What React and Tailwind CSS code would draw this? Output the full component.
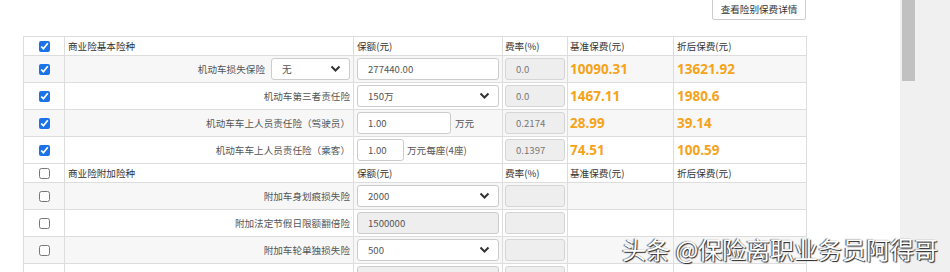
import React from "react";

const font = { fontFamily: '"Microsoft YaHei", "Noto Sans CJK SC", sans-serif' };

const Chevron = () => (
  <svg width="11" height="8" viewBox="0 0 11 8" className="shrink-0">
    <path d="M1.5 1.5 L5.5 5.5 L9.5 1.5" fill="none" stroke="#333" strokeWidth="2" />
  </svg>
);

const Select = ({ value, width }) => (
  <div
    className={`flex h-[22px] items-center justify-between rounded-[3px] border border-[#cccccc] bg-white pl-[10px] pr-[8px] text-[#555] ${width}`}
  >
    <span>{value}</span>
    <Chevron />
  </div>
);

const Input = ({ value, width, disabled }) => (
  <div
    className={`flex h-[22px] items-center rounded-[3px] border border-[#cccccc] pl-[10px] text-[#555] ${width} ${
      disabled ? "bg-[#eeeeee]" : "bg-white"
    }`}
  >
    {value}
  </div>
);

const Rate = ({ value }) => (
  <div className="mx-auto flex h-[22px] w-[60px] items-center rounded-[3px] border border-[#d5d5d5] bg-[#eeeeee] pl-[10px] text-[#777]">
    {value}
  </div>
);

const Box = ({ checked }) => (
  <input
    type="checkbox"
    checked={checked}
    readOnly
    className="m-0 mx-auto block h-[11px] w-[11px] accent-[#1a73e8]"
  />
);

const Money = ({ v }) => (
  <span className="pl-[2px] text-[13.5px] font-bold text-[#f5a31a]" style={{ fontFamily: '"Open Sans", sans-serif' }}>
    {v}
  </span>
);

const Header = ({ title, checked }) => (
  <tr className="h-[19px] bg-white text-[#333]">
    <td className="border border-[#dddddd]">
      <Box checked={checked} />
    </td>
    <td className="border border-[#dddddd] pl-[3px]">{title}</td>
    <td className="border border-[#dddddd] pl-[3px]">保额(元)</td>
    <td className="border border-[#dddddd] pl-[2px]">费率(%)</td>
    <td className="border border-[#dddddd] pl-[2px]">基准保费(元)</td>
    <td className="border border-[#dddddd] pl-[3px]">折后保费(元)</td>
  </tr>
);

const Row = ({ gray, checked, name, nameExtra, amount, rate, base, disc }) => (
  <tr className={`h-[27px] ${gray ? "bg-[#f7f7f7]" : "bg-white"}`}>
    <td className="border border-[#dddddd]">
      <Box checked={checked} />
    </td>
    <td className="border border-[#dddddd] pr-[3px]">
      <div className="flex items-center justify-end gap-[6px] text-[#555]">
        <span>{name}</span>
        {nameExtra}
      </div>
    </td>
    <td className="border border-[#dddddd] pl-[3px]">{amount}</td>
    <td className="border border-[#dddddd]">{rate}</td>
    <td className="border border-[#dddddd]">{base && <Money v={base} />}</td>
    <td className="border border-[#dddddd] pl-[1px]">{disc && <Money v={disc} />}</td>
  </tr>
);

export default function App() {
  return (
    <div className="relative flex h-[272px] w-[950px] overflow-hidden bg-white text-[9.6px]" style={font}>
      <div className="flex w-[900px] flex-col">
        <div className="flex justify-end pr-[94px]">
          <button className="-mt-[4px] h-[24px] w-[94px] rounded-[2px] border border-[#cccccc] bg-white pt-[3px] text-[9.6px] text-[#333]">
            查看险别保费详情
          </button>
        </div>
        <table className="ml-[23px] mt-[16px] w-[783px] table-fixed border-collapse">
          <colgroup>
            <col className="w-[41px]" />
            <col className="w-[289px]" />
            <col className="w-[149px]" />
            <col className="w-[65px]" />
            <col className="w-[106px]" />
            <col className="w-[133px]" />
          </colgroup>
          <tbody>
            <Header title="商业险基本险种" checked />
            <Row
              gray
              checked
              name="机动车损失保险"
              nameExtra={<Select value="无" width="w-[79px]" />}
              amount={<Input value="277440.00" width="w-[142px]" />}
              rate={<Rate value="0.0" />}
              base="10090.31"
              disc="13621.92"
            />
            <Row
              checked
              name="机动车第三者责任险"
              amount={<Select value="150万" width="w-[142px]" />}
              rate={<Rate value="0.0" />}
              base="1467.11"
              disc="1980.6"
            />
            <Row
              gray
              checked
              name="机动车车上人员责任险（驾驶员）"
              amount={
                <div className="flex items-center gap-[4px] text-[#555]">
                  <Input value="1.00" width="w-[94px]" />
                  <span>万元</span>
                </div>
              }
              rate={<Rate value="0.2174" />}
              base="28.99"
              disc="39.14"
            />
            <Row
              checked
              name="机动车车上人员责任险（乘客）"
              amount={
                <div className="flex items-center gap-[3px] text-[#555]">
                  <Input value="1.00" width="w-[47px]" />
                  <span>万元每座(4座)</span>
                </div>
              }
              rate={<Rate value="0.1397" />}
              base="74.51"
              disc="100.59"
            />
            <Header title="商业险附加险种" checked={false} />
            <Row
              gray
              checked={false}
              name="附加车身划痕损失险"
              amount={<Select value="2000" width="w-[142px]" />}
              rate={<Rate value="" />}
            />
            <Row
              checked={false}
              name="附加法定节假日限额翻倍险"
              amount={<Input value="1500000" width="w-[142px]" disabled />}
              rate={<Rate value="" />}
            />
            <Row
              gray
              checked={false}
              name="附加车轮单独损失险"
              amount={<Select value="500" width="w-[142px]" />}
              rate={<Rate value="" />}
            />
            <Row
              checked={false}
              name="附加修理期间费用补偿险"
              amount={<Input value="" width="w-[142px]" disabled />}
              rate={<Rate value="" />}
            />
          </tbody>
        </table>
      </div>
      <div className="w-[50px] bg-[#f0f0f0] pl-[2px]">
        <div className="h-[81px] w-[13px] bg-[#c1c1c1]" />
      </div>
      <div className="absolute left-[622px] top-[237px] text-[24px] leading-none text-white [text-shadow:1px_1px_1px_#222,-1px_0_1px_#444]">
        头条 @保险离职业务员阿得哥
      </div>
    </div>
  );
}
